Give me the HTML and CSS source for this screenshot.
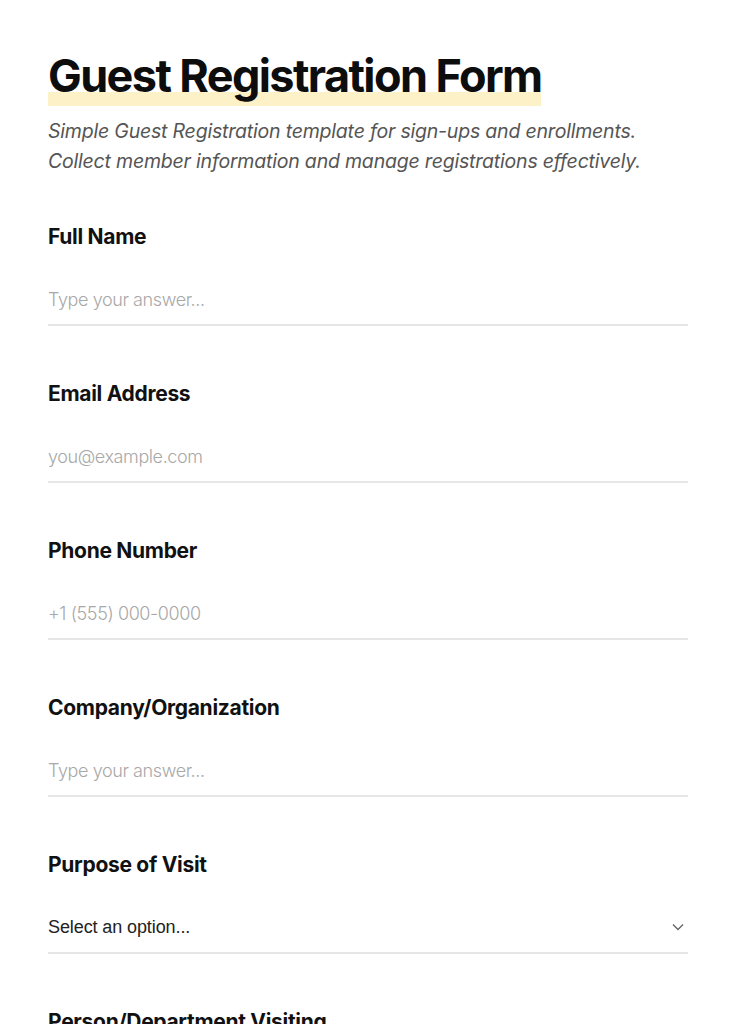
FILE: index.html
```html
<!DOCTYPE html>
<html lang="en">
<head>
<meta charset="utf-8">
<title>Guest Registration Form</title>
<link rel="stylesheet" href="styles.css">
</head>
<body>
<main class="page">
  <header class="head">
    <h1 class="title">Guest Registration Form</h1>
    <p class="lead">Simple Guest Registration template for sign-ups and enrollments. Collect member information and manage registrations effectively.</p>
  </header>
  <form class="form">
    <div class="field">
      <label class="label">Full Name</label>
      <input class="input" type="text" placeholder="Type your answer...">
    </div>
    <div class="field">
      <label class="label">Email Address</label>
      <input class="input" type="email" placeholder="you@example.com">
    </div>
    <div class="field">
      <label class="label">Phone Number</label>
      <input class="input" type="tel" placeholder="+1 (555) 000-0000">
    </div>
    <div class="field">
      <label class="label">Company/Organization</label>
      <input class="input" type="text" placeholder="Type your answer...">
    </div>
    <div class="field">
      <label class="label">Purpose of Visit</label>
      <div class="select">
        <span class="select-text">Select an option...</span>
        <svg class="chev" width="12" height="8" viewBox="0 0 12 8"><path d="M1 1.5l5 5 5-5" fill="none" stroke="#666" stroke-width="1.4"/></svg>
      </div>
    </div>
    <div class="field">
      <label class="label">Person/Department Visiting</label>
      <input class="input" type="text" placeholder="Type your answer...">
    </div>
  </form>
</main>
</body>
</html>
```
FILE: styles.css
```css
* { box-sizing: border-box; }
html, body { margin: 0; background: #fff; }
body { font-family: "Inter", "Open Sans", sans-serif; color: #111; }
.page { padding: 48px 48px 0; }
.head { margin-bottom: 47px; }
.title { display: inline-block; margin: 0; padding-bottom: 2px; font-size: 45px; line-height: 56px; font-weight: 700; letter-spacing: -1.6px; color: #0d0d0d; background: linear-gradient(#fdf1c8, #fdf1c8) no-repeat left bottom / 100% 14px; }
.lead { margin: 10px 0 0; max-width: 610px; font-size: 19.5px; line-height: 30px; font-style: italic; color: #555; letter-spacing: -0.2px; }
.form { display: flex; flex-direction: column; gap: 54px; }
.field { display: flex; flex-direction: column; gap: 34px; }
.label { font-size: 21px; font-weight: 700; letter-spacing: -0.3px; line-height: 28px; color: #111; }
.input { border: 0; border-bottom: 2px solid #e6e6e6; padding: 0 0 11px; font: inherit; font-size: 18px; font-weight: 300; line-height: 28px; height: 41px; outline: none; background: transparent; color: #222; }
.input::placeholder { color: #a8a8a8; letter-spacing: -0.4px; }
.select { display: flex; justify-content: space-between; align-items: center; border-bottom: 2px solid #e6e6e6; padding: 0 4px 11px 0; height: 41px; }
.select-text { font-family: "Liberation Sans", sans-serif; font-size: 18px; line-height: 28px; color: #222; letter-spacing: -0.1px; }
```
